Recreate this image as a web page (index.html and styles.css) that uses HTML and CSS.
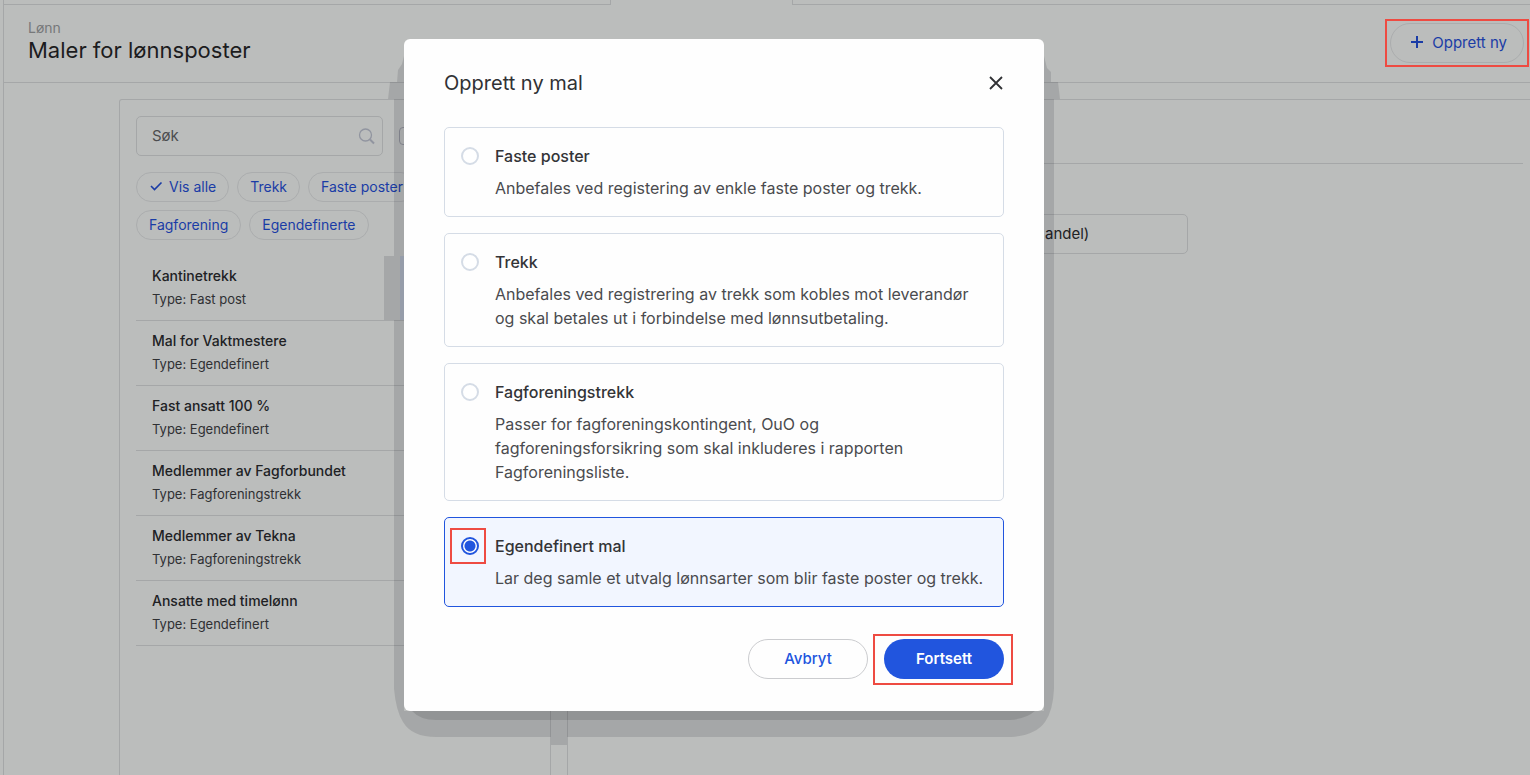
FILE: index.html
```html
<!DOCTYPE html>
<html lang="no">
<head>
<meta charset="utf-8">
<title>Maler for lønnsposter</title>
<link rel="stylesheet" href="styles.css">
</head>
<body>
<div class="app">
  <div class="tabs"><span class="tabs-before"></span><span class="tab-active"></span><span class="tabs-after"></span></div>
  <header class="page-header">
    <div>
      <p class="crumb">Lønn</p>
      <h1 class="page-title">Maler for lønnsposter</h1>
    </div>
    <div class="marked marked-create">
      <button class="pill create" type="button">
        <svg width="14" height="14" viewBox="0 0 14 14" aria-hidden="true"><path d="M7 1v12M1 7h12" fill="none" stroke="currentColor" stroke-width="2"/></svg>
        Opprett ny
      </button>
    </div>
  </header>
  <div class="columns">
    <aside class="sidebar">
      <div class="search-row">
        <div class="search">
          <input class="search-input" type="text" placeholder="Søk" aria-label="Søk">
          <svg class="search-icon" width="18" height="18" viewBox="0 0 18 18" aria-hidden="true"><circle cx="7.5" cy="7" r="6" fill="none" stroke="currentColor" stroke-width="1.300"/><path d="M12 11.500l4 4" stroke="currentColor" stroke-width="2"/></svg>
        </div>
        <input class="tick" type="checkbox" aria-label="Velg">
      </div>
      <div class="chips">
        <div class="chip-row">
          <button class="pill chip" type="button"><svg width="14" height="10" viewBox="0 0 14 10" aria-hidden="true"><path d="M2 5l3.500 3.500L12.500 1.500" fill="none" stroke="currentColor" stroke-width="1.600"/></svg>Vis alle</button>
          <button class="pill chip" type="button">Trekk</button>
          <button class="pill chip" type="button">Faste poster</button>
        </div>
        <div class="chip-row">
          <button class="pill chip" type="button">Fagforening</button>
          <button class="pill chip" type="button">Egendefinerte</button>
        </div>
      </div>
      <ul class="templates">
        <li class="template"><h2>Kantinetrekk</h2><p>Type: Fast post</p></li>
        <li class="template"><h2>Mal for Vaktmestere</h2><p>Type: Egendefinert</p></li>
        <li class="template"><h2>Fast ansatt 100 %</h2><p>Type: Egendefinert</p></li>
        <li class="template"><h2>Medlemmer av Fagforbundet</h2><p>Type: Fagforeningstrekk</p></li>
        <li class="template"><h2>Medlemmer av Tekna</h2><p>Type: Fagforeningstrekk</p></li>
        <li class="template"><h2>Ansatte med timelønn</h2><p>Type: Egendefinert</p></li>
      </ul>
    </aside>
    <main class="detail">
      <div class="detail-head"></div>
      <input class="detail-field" type="text" value="andel)" aria-label="Beskrivelse">
    </main>
  </div>
</div>

<div class="overlay">
  <div class="modal-wrap">
    <svg class="modal-shade" viewBox="0 0 672 706" preserveAspectRatio="none" aria-hidden="true">
      <path class="shade-light" d="M16 17L14 25L10 31L9 43H2L0 60H6V650Q8 672 15 683Q24 698 48 698H163V706H179V698H624Q648 696 657 683Q665 672 666 650V60H672L670 43H663V33L659 29L656 17V672H16Z"/>
      <path class="shade-dark" d="M24 672Q32 681 48 681H622Q638 680 647 672Z"/>
      <path class="shade-light" d="M-4 217H6V281H-4Z"/>
      <path class="shade-blue" d="M12 217H16V281H12Z"/>
    </svg>
    <form class="modal" role="dialog" aria-labelledby="modal-title">
      <div class="modal-head">
        <h2 id="modal-title" class="modal-title">Opprett ny mal</h2>
        <button class="close" type="button" aria-label="Lukk"><svg width="16" height="16" viewBox="0 0 16 16" aria-hidden="true"><path d="M2 2l12 12M14 2L2 14" fill="none" stroke="currentColor" stroke-width="1.800"/></svg></button>
      </div>
      <div class="options">
        <label class="option"><span class="radio-cell"><input class="radio" type="radio" name="mal"></span><span class="option-text"><span class="option-title">Faste poster</span><span>Anbefales ved registering av enkle faste poster og trekk.</span></span></label>
        <label class="option"><span class="radio-cell"><input class="radio" type="radio" name="mal"></span><span class="option-text"><span class="option-title">Trekk</span><span>Anbefales ved registrering av trekk som kobles mot leverandør og skal betales ut i forbindelse med lønnsutbetaling.</span></span></label>
        <label class="option"><span class="radio-cell"><input class="radio" type="radio" name="mal"></span><span class="option-text"><span class="option-title">Fagforeningstrekk</span><span>Passer for fagforeningskontingent, OuO og<br>fagforeningsforsikring som skal inkluderes i rapporten Fagforeningsliste.</span></span></label>
        <label class="option option-selected"><span class="radio-cell marked marked-radio"><input class="radio" type="radio" name="mal" checked></span><span class="option-text"><span class="option-title">Egendefinert mal</span><span>Lar deg samle et utvalg lønnsarter som blir faste poster og trekk.</span></span></label>
      </div>
      <div class="actions">
        <button class="action action-plain" type="button">Avbryt</button>
        <span class="marked marked-submit"><button class="action action-primary" type="submit">Fortsett</button></span>
      </div>
    </form>
  </div>
</div>
</body>
</html>
```

FILE: styles.css
```css
* { box-sizing: border-box; }
html, body { height: 100%; }
body {
  margin: 0;
  overflow: hidden;
  position: relative;
  background: #bbbdbc;
  color: #202124;
  font-family: Inter, "Liberation Sans", sans-serif;
  font-size: 14px;
  --line: #a5a7a8;
  --link: #1a3ca6;
}
h1, h2, p, ul { margin: 0; padding: 0; font-weight: 400; }
button, input { font: inherit; color: inherit; margin: 0; }

.app { display: flex; flex-direction: column; height: 100%; margin-left: 3px; border-left: 1px solid var(--line); }
.tabs { display: flex; height: 5px; }
.tabs-before { width: 607px; border-bottom: 1px solid var(--line); border-right: 1px solid var(--line); }
.tab-active { width: 181px; }
.tabs-after { flex: 1; border-bottom: 1px solid var(--line); border-left: 1px solid var(--line); }

.page-header {
  display: flex;
  justify-content: space-between;
  align-items: flex-start;
  height: 78px;
  padding: 14px 6px 0 24px;
  border-bottom: 1px solid var(--line);
}
.crumb { color: #76787a; line-height: 18px; }
.page-title { font-size: 22px; line-height: 26px; color: #1c1c1e; }

.pill {
  display: inline-flex;
  align-items: center;
  background: none;
  border: 1px solid #abadae;
  border-radius: 20px;
  color: var(--link);
  white-space: nowrap;
}
.create { gap: 8px; height: 40px; padding: 0 16px 2px 19px; font-size: 15px; }

.marked { position: relative; }
.marked::after { content: ""; position: absolute; border: 2px solid #ee4b42; pointer-events: none; }
.marked-create { margin-top: 4px; }
.marked-create::after { inset: -4px -5px; }

.columns { flex: 1; display: flex; gap: 16px; padding: 16px 0 0 115px; min-height: 0; }
.sidebar {
  width: 432px;
  flex: none;
  padding: 16px;
  border: 1px solid var(--line);
  border-bottom: 0;
  border-top-left-radius: 3px;
}
.search-row { display: flex; align-items: center; gap: 16px; }
.search { position: relative; width: 247px; }
.search-input {
  display: block;
  width: 100%;
  height: 40px;
  padding: 0 40px 2px 15px;
  background: none;
  border: 1px solid var(--line);
  border-radius: 5px;
  font-size: 15px;
}
.search-input::placeholder { color: #4c4d4f; opacity: 1; }
.search-icon { position: absolute; right: 7px; top: 12px; color: #9195a0; }
.tick { appearance: none; width: 18px; height: 18px; border: 1px solid #8f9199; border-radius: 4px; }
.chips { display: flex; flex-direction: column; gap: 8px; margin-top: 16px; }
.chip-row { display: flex; gap: 8px; }
.chip { height: 30px; padding: 0 12px 2px; gap: 6px; }
.templates { list-style: none; margin-top: 16px; }
.template { height: 65px; padding: 10px 16px; border-bottom: 1px solid var(--line); }
.template h2 { font-size: 14px; font-weight: 500; line-height: 20px; }
.template p { font-size: 13px; line-height: 26px; color: #2f3033; }

.detail { flex: 1; border-top: 1px solid var(--line); border-left: 1px solid var(--line); }
.detail-head { height: 64px; margin: 0 7px 50px 16px; border-bottom: 1px solid var(--line); }
.detail-field {
  display: block;
  width: 604px;
  height: 40px;
  margin-left: 16px;
  padding: 0 16px 2px 460px;
  background: none;
  border: 1px solid var(--line);
  border-radius: 5px;
  font-size: 15px;
}

.overlay {
  position: absolute;
  inset: 0;
  display: flex;
  justify-content: center;
  align-items: flex-start;
  padding: 39px 82px 0 0;
}
.modal-wrap { position: relative; width: 640px; }
.modal-shade { position: absolute; left: -16px; top: 0; width: calc(100% + 32px); height: calc(100% + 34px); overflow: visible; }
.shade-light { fill: rgba(0, 0, 16, 0.115); }
.shade-dark { fill: rgba(0, 0, 0, 0.11); }
.shade-blue { fill: rgba(90, 120, 180, 0.2); }
.modal { position: relative; padding: 32px 40px; background: #fefefe; border-radius: 6px; }
.modal-head { display: flex; justify-content: space-between; align-items: center; height: 24px; margin-bottom: 32px; }
.modal-title { font-size: 20px; line-height: 24px; color: #303134; }
.close { display: flex; padding: 0; background: none; border: 0; color: #303134; }
.options { display: flex; flex-direction: column; gap: 16px; font-size: 16px; line-height: 24px; }
.option { display: flex; gap: 16px; padding: 16px; border: 1px solid #d5dce6; border-radius: 5px; color: #4a4b4e; }
.option-selected { background: #f2f6ff; border-color: #2155de; }
.option-text { display: flex; flex-direction: column; gap: 8px; }
.option-title { color: #333437; font-weight: 500; }
.radio-cell { display: flex; align-items: center; width: 18px; height: 24px; flex: none; }
.radio { appearance: none; width: 18px; height: 18px; background: #fff; border: 2px solid #d5dce6; border-radius: 50%; }
.radio:checked { border-color: #2155de; background: radial-gradient(circle, #2155de 5px, #fff 6px); }
.marked-radio::after { inset: -6px -7px -6px -11px; }
.actions { display: flex; justify-content: flex-end; gap: 16px; margin-top: 32px; }
.action { display: block; width: 120px; height: 40px; padding: 0 0 2px; border-radius: 20px; font-size: 15px; font-weight: 500; }
.action-plain { background: #fefefe; border: 1px solid #cbcccf; color: #2155de; }
.action-primary { background: #2155de; border: 0; color: #fff; font-weight: 600; }
.marked-submit::after { inset: -5px -9px -6px -11px; }
```
